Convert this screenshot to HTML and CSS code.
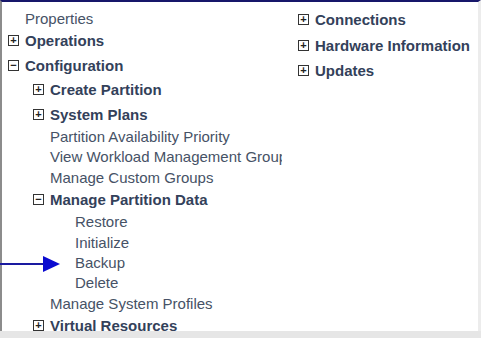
FILE: index.html
```html
<!DOCTYPE html>
<html lang="en">
<head>
  <meta charset="UTF-8">
  <title>Tasks</title>
  <link rel="stylesheet" href="styles.css">
</head>
<body>

<div class="panel">
  <div class="columns">
    <ul class="tree left">
      <li class="leaf lvl0">Properties</li>
      <li class="node lvl0"><span class="box">+</span>Operations</li>
      <li class="node lvl0"><span class="box">&minus;</span>Configuration</li>
      <li class="node lvl1"><span class="box">+</span>Create Partition</li>
      <li class="node lvl1"><span class="box">+</span>System Plans</li>
      <li class="leaf lvl1">Partition Availability Priority</li>
      <li class="leaf lvl1">View Workload Management Groups</li>
      <li class="leaf lvl1">Manage Custom Groups</li>
      <li class="node lvl1"><span class="box">&minus;</span>Manage Partition Data</li>
      <li class="leaf lvl2">Restore</li>
      <li class="leaf lvl2">Initialize</li>
      <li class="leaf lvl2">Backup</li>
      <li class="leaf lvl2">Delete</li>
      <li class="leaf lvl1">Manage System Profiles</li>
      <li class="node lvl1"><span class="box">+</span>Virtual Resources</li>
    </ul>

    <ul class="tree right">
      <li class="node lvl0"><span class="box">+</span>Connections</li>
      <li class="node lvl0"><span class="box">+</span>Hardware Information</li>
      <li class="node lvl0"><span class="box">+</span>Updates</li>
    </ul>
  </div>

  <!-- pointer to Backup -->
  <svg class="arrow" width="62" height="18" viewBox="0 0 62 18">
    <line x1="0" y1="9" x2="46" y2="9" stroke="#1a1aa0" stroke-width="2"/>
    <polygon points="43,1 60,9 43,17" fill="#0a0ad0"/>
  </svg>
</div>

<div class="edge"></div>

</body>
</html>
```

FILE: styles.css
```css
html, body { margin: 0; padding: 0; background: #ffffff; }
body {
  width: 481px;
  height: 338px;
  overflow: hidden;
  font-family: "Liberation Sans", Arial, sans-serif;
  font-size: 15px;
  color: #465266;
  position: relative;
}

.panel {
  position: relative;
  height: 331px;
  border-top: 2px solid #17176a;
  border-left: 2px solid #8c8c8c;
  border-right: 3px solid #ececec;
  box-sizing: border-box;
}

.columns { display: flex; }

.tree { list-style: none; margin: 0; padding: 0; }
.tree.left { width: 280px; flex: none; overflow: hidden; padding-top: 6px; }
.tree.right { padding-top: 5px; margin-left: 10px; }

.tree li {
  white-space: nowrap;
  display: flex;
  align-items: center;
}
.leaf { height: 20.3px; }
.node {
  height: 24.5px;
  font-weight: bold;
  color: #33415a;
}
.tree.right .node { height: 25.5px; }

.lvl0 { padding-left: 6px; }
.lvl1 { padding-left: 31px; }
.lvl2 { padding-left: 73px; }
.leaf.lvl0 { padding-left: 23px; }
.leaf.lvl1 { padding-left: 48px; }

.box {
  width: 9px;
  height: 9px;
  border: 1px solid #333;
  margin-right: 6px;
  font-size: 11px;
  line-height: 9px;
  text-align: center;
  color: #222;
  font-weight: bold;
  flex: none;
}

.arrow {
  position: absolute;
  left: -2px;
  top: 253px;
}

.edge {
  height: 7px;
  background: #e6e6e6;
}
```
